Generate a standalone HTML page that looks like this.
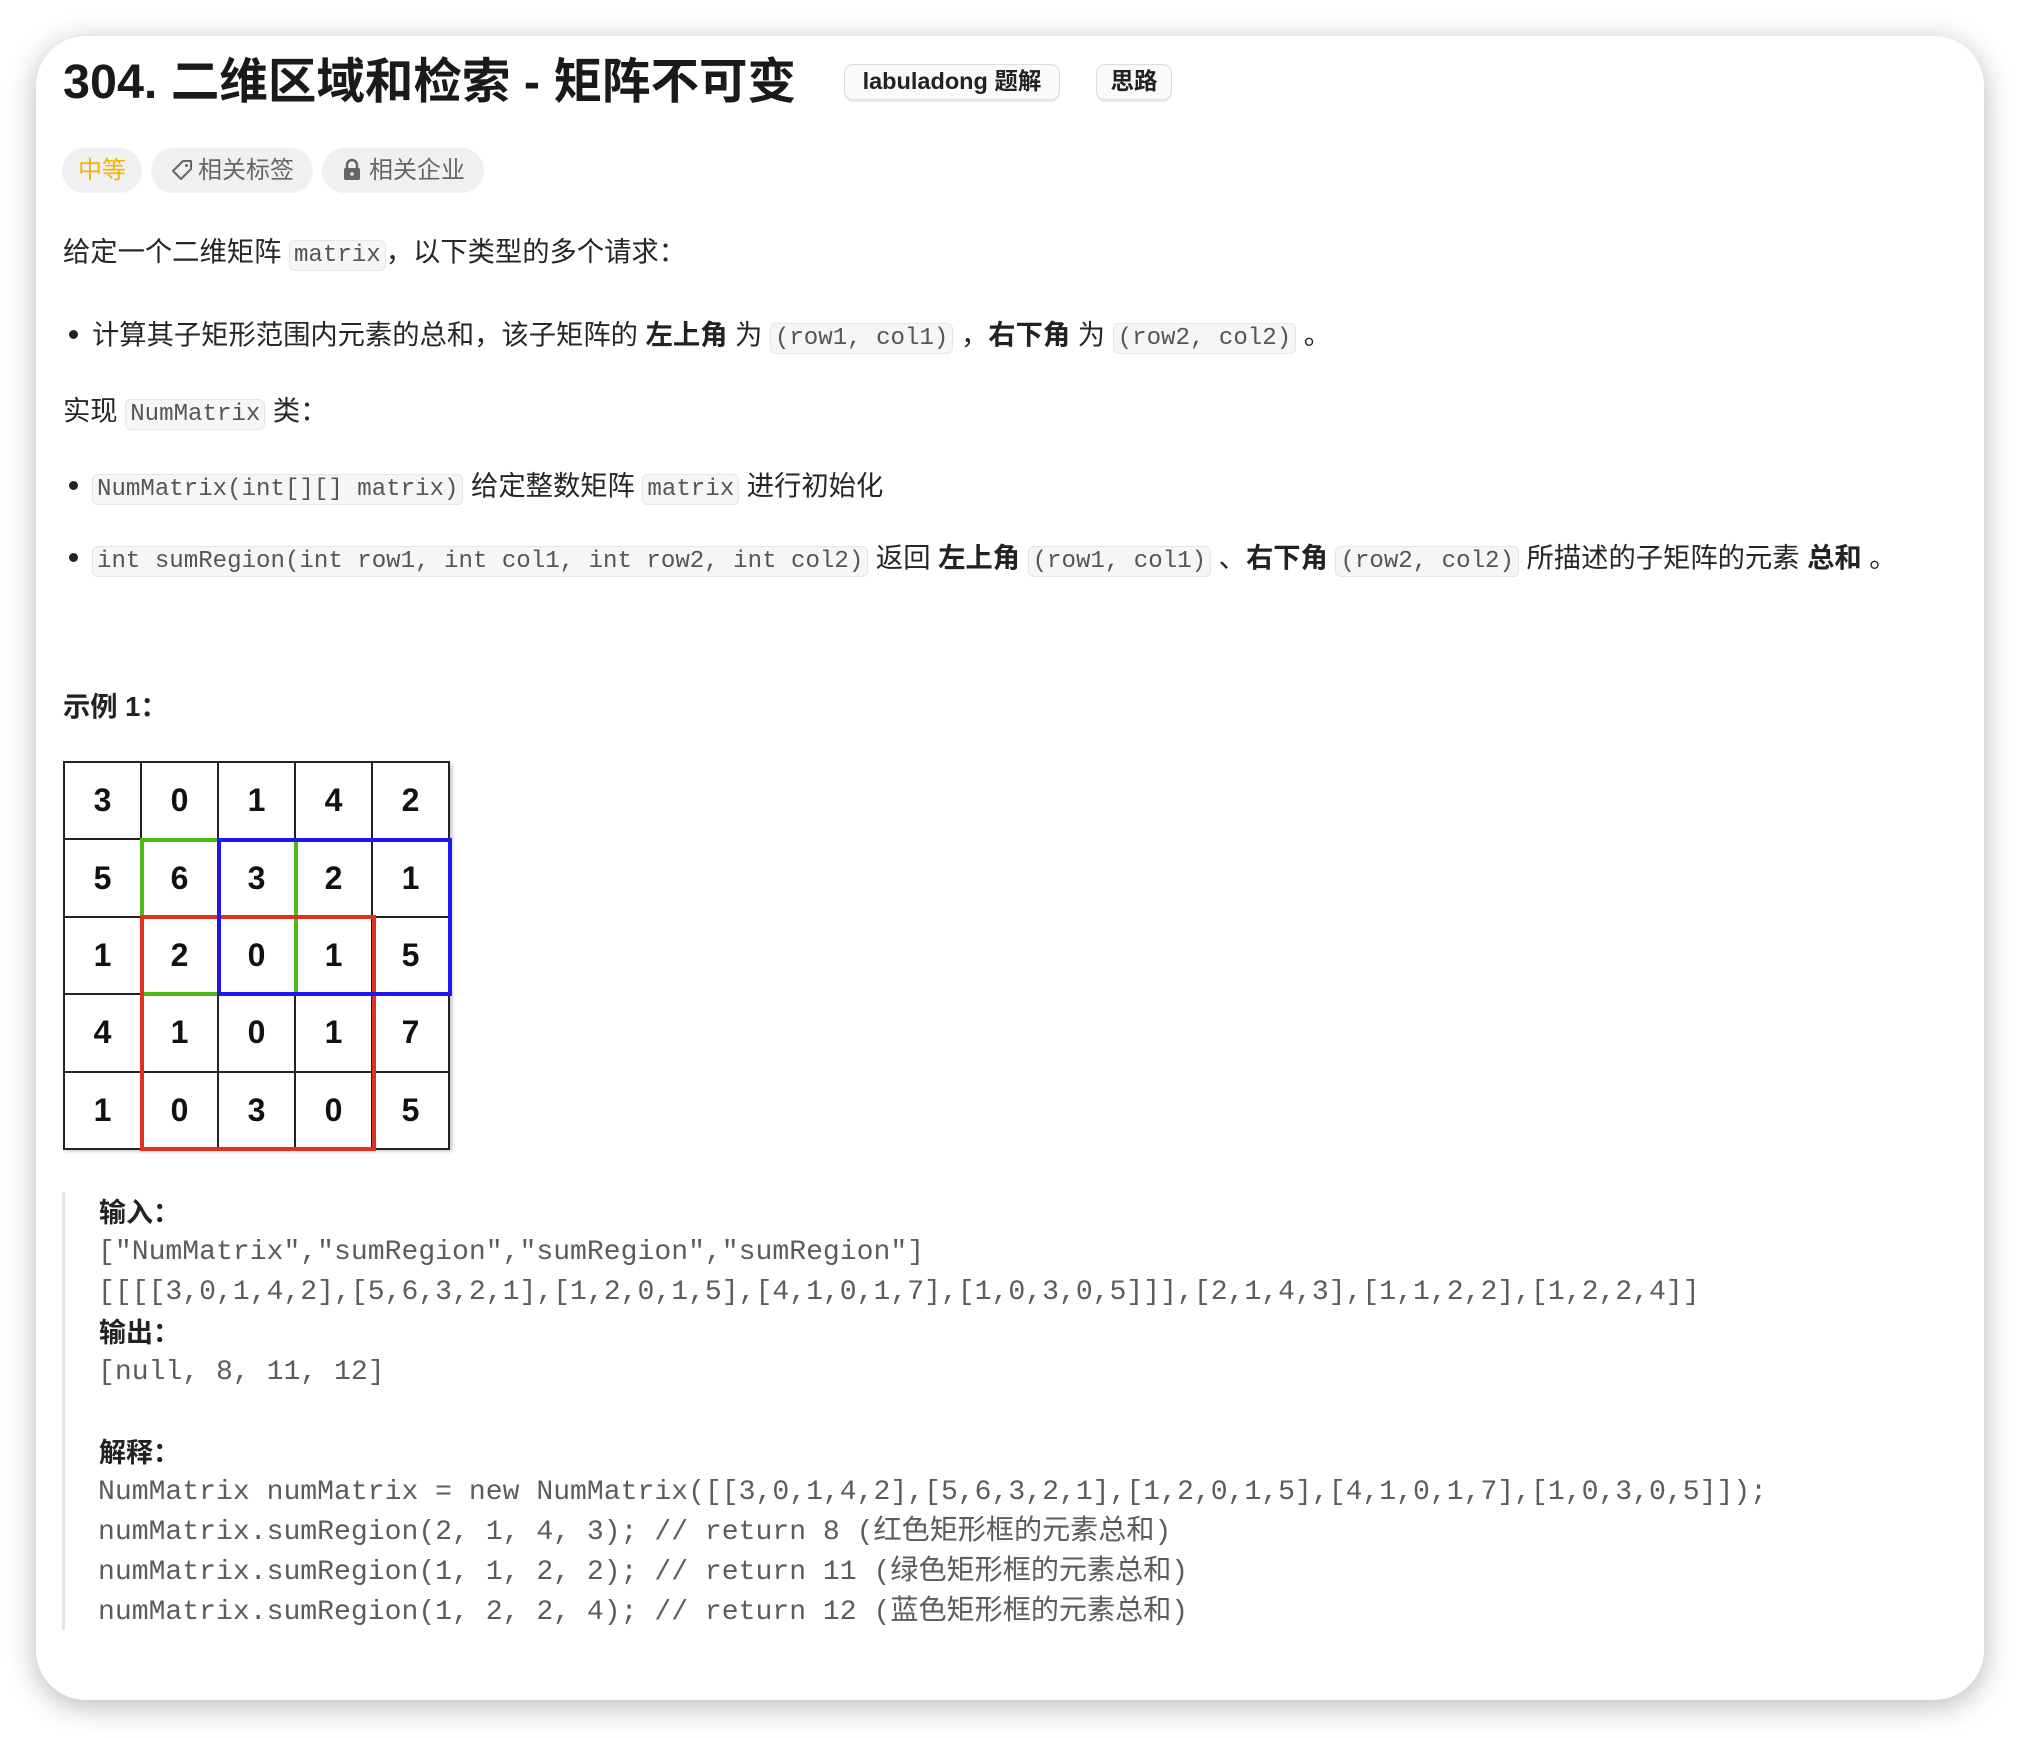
<!DOCTYPE html>
<html><head><meta charset="utf-8"><style>
*{margin:0;padding:0;box-sizing:border-box}
body{width:2020px;height:1738px;background:#fff;position:relative;overflow:hidden;font-family:"Liberation Sans","Noto Sans CJK SC",sans-serif;color:#262626}
.card{position:absolute;left:36px;top:36px;width:1948px;height:1664px;border-radius:50px;background:#fff;box-shadow:0 6px 30px rgba(0,0,0,.28)}
.a{position:absolute;white-space:nowrap}
.title{left:63px;top:51px;font-size:48.5px;font-weight:bold;line-height:62px;color:#1a1a1a}
.badge{top:64px;height:36px;border:1.5px solid #ddd;border-radius:9px;background:#fafafa;font-size:23.5px;font-weight:bold;line-height:33px;text-align:center;color:#222;box-shadow:0 2px 0 #e8e8e8}
.tag{top:148px;height:45px;border-radius:23px;background:#f0f0f0;font-size:24px;line-height:45px;color:#666;text-align:center}
.t{font-size:27.3px;line-height:40px;color:#262626}
code{font-family:"Liberation Mono",monospace;font-size:24.1px;background:#f6f6f6;border:1.5px solid #e6e6e6;border-radius:6px;padding:1px 4px;color:#555}
b{font-weight:bold;color:#222}
.dot{display:inline-block;width:9px;height:9px;border-radius:50%;background:#222;margin:0 14px 4px 6px;vertical-align:middle}
.grid{position:absolute;left:63px;top:761px;width:387px;height:387px;box-shadow:2px 3px 4px rgba(0,0,0,.25)}
.grid table{border-collapse:collapse}
.grid td{width:77.4px;height:77.4px;border:2px solid #222;text-align:center;font-size:32px;font-weight:bold;color:#111}
.r{position:absolute;border-style:solid}
.bq{position:absolute;left:62px;top:1192px;width:3px;height:438px;background:#e4e4e4}
.m{font-family:"Liberation Mono","Noto Sans CJK SC",monospace;font-size:28.1px;line-height:40px;color:#5c5c5c;left:98px}
.lb{font-size:27px;font-weight:bold;line-height:40px;color:#222;left:99px}
</style></head><body>
<div class="card"></div>
<div class="a title">304. 二维区域和检索 - 矩阵不可变</div>
<div class="a badge" style="left:844px;width:216px">labuladong 题解</div>
<div class="a badge" style="left:1096px;width:76px">思路</div>
<div class="a tag" style="left:62px;width:80px;color:#f5b400">中等</div>
<div class="a tag" style="left:151px;width:162px"><svg width="24" height="24" viewBox="0 0 24 24" style="vertical-align:-4px;margin-right:4px"><path d="M13 3h8v8L11 21 3 13z" fill="none" stroke="#666" stroke-width="2" stroke-linejoin="round"/><circle cx="16.5" cy="7.5" r="1.5" fill="#666"/></svg>相关标签</div>
<div class="a tag" style="left:322px;width:162px"><svg width="22" height="24" viewBox="0 0 22 24" style="vertical-align:-4px;margin-right:6px"><path d="M6 11V7a5 5 0 0 1 10 0v4" fill="none" stroke="#666" stroke-width="2.5"/><rect x="3" y="10" width="16" height="12" rx="2" fill="#666"/><circle cx="11" cy="16" r="1.8" fill="#f0f0f0"/></svg>相关企业</div>
<div class="a t" style="left:63px;top:232px">给定一个二维矩阵 <code>matrix</code>，以下类型的多个请求：</div>
<div class="a t" style="left:63px;top:315px"><span class="dot"></span>计算其子矩形范围内元素的总和，该子矩阵的 <b>左上角</b> 为 <code>(row1, col1)</code> ，<b>右下角</b> 为 <code>(row2, col2)</code> 。</div>
<div class="a t" style="left:63px;top:391px">实现 <code>NumMatrix</code> 类：</div>
<div class="a t" style="left:63px;top:466px"><span class="dot"></span><code>NumMatrix(int[][] matrix)</code> 给定整数矩阵 <code>matrix</code> 进行初始化</div>
<div class="a t" style="left:63px;top:538px"><span class="dot"></span><code>int sumRegion(int row1, int col1, int row2, int col2)</code> 返回 <b>左上角</b> <code>(row1, col1)</code> 、<b>右下角</b> <code>(row2, col2)</code> 所描述的子矩阵的元素 <b>总和</b> 。</div>
<div class="a t" style="left:63px;top:687px;font-weight:bold;color:#222">示例 1：</div>
<div class="grid"><table>
<tr><td>3</td><td>0</td><td>1</td><td>4</td><td>2</td></tr>
<tr><td>5</td><td>6</td><td>3</td><td>2</td><td>1</td></tr>
<tr><td>1</td><td>2</td><td>0</td><td>1</td><td>5</td></tr>
<tr><td>4</td><td>1</td><td>0</td><td>1</td><td>7</td></tr>
<tr><td>1</td><td>0</td><td>3</td><td>0</td><td>5</td></tr>
</table>
<div class="r" style="left:77px;top:77px;width:158px;height:158px;border-width:4px;border-color:#4cbb17"></div>
<div class="r" style="left:77px;top:154px;width:236px;height:236px;border-width:4px;border-color:#e0301e"></div>
<div class="r" style="left:154px;top:77px;width:235px;height:158px;border-width:4px;border-color:#1e17f0"></div>
</div>
<div class="bq"></div>
<div class="a lb" style="top:1193px">输入：</div>
<div class="a m" style="top:1233px">["NumMatrix","sumRegion","sumRegion","sumRegion"]</div>
<div class="a m" style="top:1273px">[[[[3,0,1,4,2],[5,6,3,2,1],[1,2,0,1,5],[4,1,0,1,7],[1,0,3,0,5]]],[2,1,4,3],[1,1,2,2],[1,2,2,4]]</div>
<div class="a lb" style="top:1313px">输出：</div>
<div class="a m" style="top:1353px">[null, 8, 11, 12]</div>
<div class="a lb" style="top:1433px">解释：</div>
<div class="a m" style="top:1473px">NumMatrix numMatrix = new NumMatrix([[3,0,1,4,2],[5,6,3,2,1],[1,2,0,1,5],[4,1,0,1,7],[1,0,3,0,5]]);</div>
<div class="a m" style="top:1513px">numMatrix.sumRegion(2, 1, 4, 3); // return 8 (红色矩形框的元素总和)</div>
<div class="a m" style="top:1553px">numMatrix.sumRegion(1, 1, 2, 2); // return 11 (绿色矩形框的元素总和)</div>
<div class="a m" style="top:1593px">numMatrix.sumRegion(1, 2, 2, 4); // return 12 (蓝色矩形框的元素总和)</div>
</body></html>
